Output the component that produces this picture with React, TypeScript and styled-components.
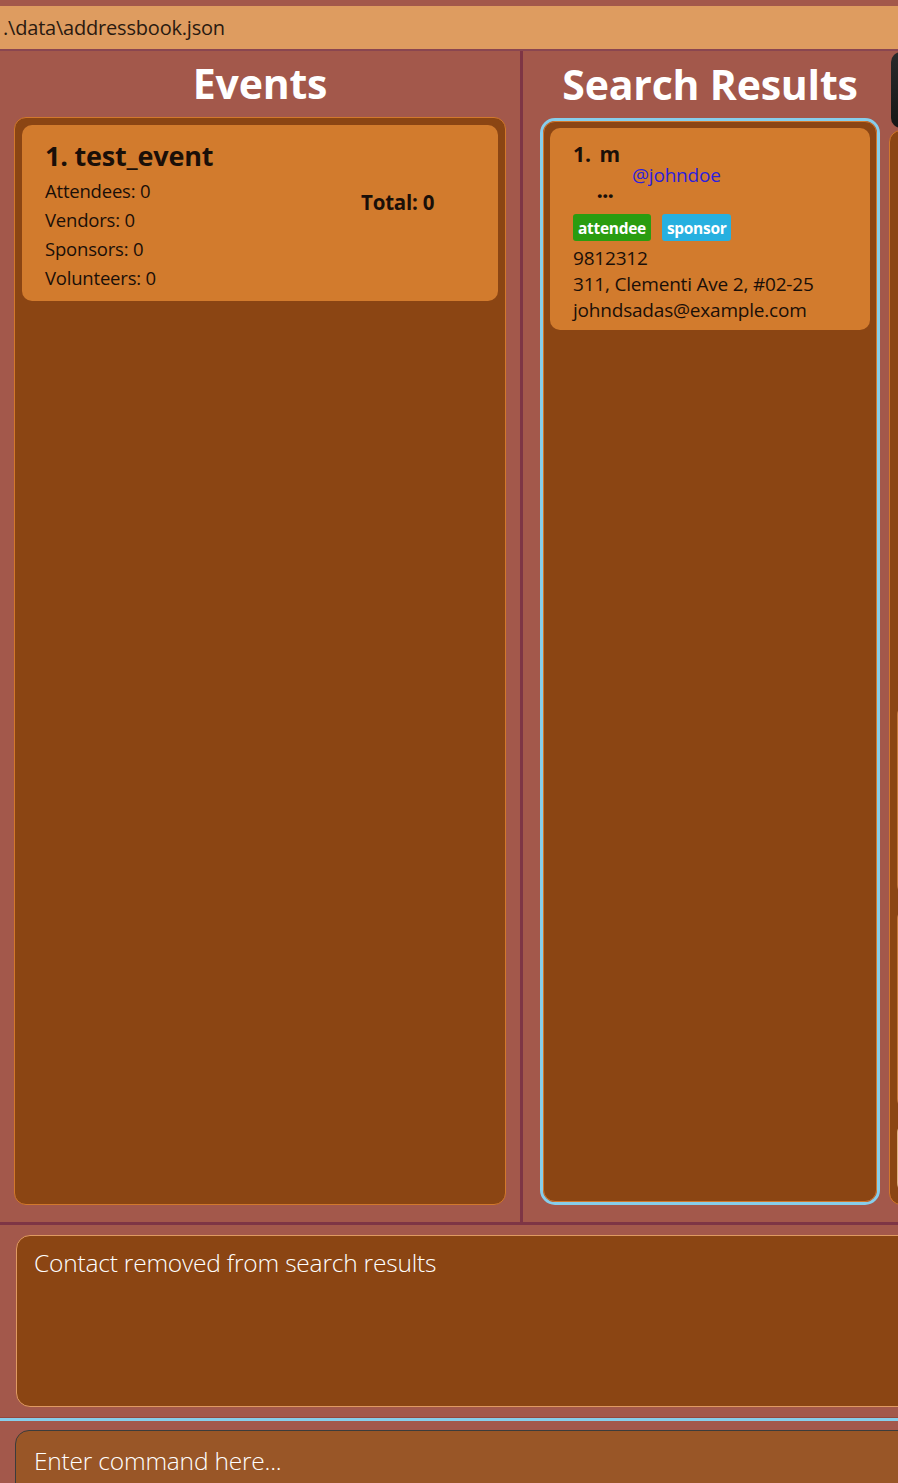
import styled, { createGlobalStyle } from "styled-components";

const GlobalStyle = createGlobalStyle`
  html, body {
    margin: 0;
    padding: 0;
    background: #a3584b;
    overflow: hidden;
  }
  * {
    box-sizing: border-box;
  }
`;

const Window = styled.div`
  width: 898px;
  height: 1483px;
  display: flex;
  flex-direction: column;
  overflow: hidden;
  background: #a3584b;
  font-family: "Open Sans", "Noto Sans", sans-serif;
`;

const PathBar = styled.div`
  margin-top: 6px;
  height: 45px;
  flex-shrink: 0;
  display: flex;
  align-items: center;
  padding-left: 3px;
  background: #de9c60;
  border-bottom: 2px solid #8a4650;
  color: #2a1a10;
  font-size: 20px;
  letter-spacing: -0.2px;
`;

const Main = styled.div`
  height: 1174px;
  flex-shrink: 0;
  display: flex;
  border-bottom: 3px solid #7e3545;
`;

const Column = styled.div<{ $width: number; $pad: string }>`
  width: ${(p) => p.$width}px;
  flex-shrink: 0;
  display: flex;
  flex-direction: column;
  padding: ${(p) => p.$pad};
`;

const Divider = styled.div`
  width: 3px;
  flex-shrink: 0;
  background: #7e3545;
`;

const Heading = styled.h1<{ $height: number }>`
  margin: 0;
  height: ${(p) => p.$height}px;
  display: flex;
  align-items: center;
  justify-content: center;
  color: #ffffff;
  font-size: 41px;
  font-weight: 700;
  letter-spacing: -0.2px;
  padding-bottom: 2px;
`;

const ListPanel = styled.div`
  flex: 1;
  background: #8b4513;
  border: 1px solid #d2782c;
  border-radius: 12px;
  padding: 7px 7px;
`;

const FocusRing = styled.div`
  flex: 1;
  display: flex;
  border: 3px solid #87ceeb;
  border-radius: 15px;
`;

const FocusPanel = styled(ListPanel)`
  padding: 6px;
  border-radius: 12px;
`;

const Card = styled.div`
  background: #d27b2d;
  border-radius: 10px;
  color: #1a0f08;
`;

const EventCard = styled(Card)`
  display: flex;
  padding: 14px 0 9px 23px;
`;

const EventInfo = styled.div`
  flex: 1;
  display: flex;
  flex-direction: column;
`;

const EventTitle = styled.div`
  font-size: 27px;
  font-weight: 700;
  line-height: 34px;
  margin-bottom: 3px;
  letter-spacing: -0.2px;
`;

const StatLine = styled.div`
  font-size: 18.5px;
  line-height: 29px;
  letter-spacing: -0.2px;
`;

const Total = styled.div`
  width: 137px;
  padding-top: 49px;
  font-size: 20.5px;
  font-weight: 700;
  letter-spacing: -0.2px;
`;

const PersonCard = styled(Card)`
  padding: 12px 0 7px 23px;
`;

const NameRow = styled.div`
  font-size: 21px;
  font-weight: 700;
  line-height: 28px;
  word-spacing: 3px;
`;

const Handle = styled.div`
  padding-left: 59px;
  margin-top: -5px;
  color: #2c1fdc;
  font-size: 19px;
  line-height: 24px;
  letter-spacing: -0.2px;
`;

const Ellipsis = styled.div`
  padding-left: 24px;
  margin-top: -6px;
  font-size: 19px;
  font-weight: 800;
  line-height: 20px;
`;

const Tags = styled.div`
  display: flex;
  gap: 11px;
  margin-top: 13px;
  margin-bottom: 4px;
`;

const Tag = styled.span<{ $color: string }>`
  height: 27px;
  display: inline-flex;
  align-items: center;
  padding: 0 5px;
  border-radius: 3px;
  background: ${(p) => p.$color};
  color: #ffffff;
  font-size: 15.5px;
  font-weight: 700;
  letter-spacing: -0.3px;
`;

const Detail = styled.div`
  font-size: 19px;
  line-height: 26px;
  letter-spacing: -0.2px;
`;

const ClippedColumn = styled.div`
  flex-shrink: 0;
  width: 300px;
  display: flex;
  flex-direction: column;
  padding: 0 0 17px 0;
`;

const DarkBadge = styled.div`
  margin: 1px 0 2px 2px;
  height: 76px;
  width: 60px;
  border-radius: 10px;
  background: linear-gradient(#2a2a2a, #161616);
`;

const SliverPanel = styled(ListPanel)`
  display: flex;
  flex-direction: column;
  gap: 14px;
  padding: 10px 0 6px 7px;
`;

const Sliver = styled.div<{ $height: number; $tone: string }>`
  height: ${(p) => p.$height}px;
  border-radius: 10px;
  background: ${(p) => p.$tone};
`;

const ResultArea = styled.div`
  height: 193px;
  flex-shrink: 0;
  padding: 10px 0 0 16px;
  border-bottom: 1px solid #94473d;
`;

const ResultBox = styled.div`
  height: 172px;
  width: 900px;
  background: #8b4513;
  border: 1px solid #e09a62;
  border-radius: 14px;
  padding: 10px 17px;
  color: #ffffff;
  font-size: 24.5px;
  font-weight: 300;
  letter-spacing: -0.2px;
`;

const CommandArea = styled.div`
  flex: 1;
  border-top: 3px solid #87ceeb;
  padding: 9px 0 0 15px;
`;

const CommandInput = styled.input`
  width: 900px;
  height: 70px;
  background: #995627;
  border: 1.5px solid #3c3c3c;
  border-radius: 14px;
  padding: 0 18px 10px;
  color: #ffffff;
  font-family: "Open Sans", "Noto Sans", sans-serif;
  font-size: 24.5px;
  font-weight: 300;
  letter-spacing: -0.2px;
  outline: none;
  &::placeholder {
    color: #ffffff;
    opacity: 1;
  }
`;

const stats = ["Attendees", "Vendors", "Sponsors", "Volunteers"];

export default function App() {
  return (
    <>
      <GlobalStyle />
      <Window>
        <PathBar>.\data\addressbook.json</PathBar>
        <Main>
          <Column $width={520} $pad="0 14px 17px 14px">
            <Heading $height={66}>Events</Heading>
            <ListPanel>
              <EventCard>
                <EventInfo>
                  <EventTitle>1. test_event</EventTitle>
                  {stats.map((s) => (
                    <StatLine key={s}>{s}: 0</StatLine>
                  ))}
                </EventInfo>
                <Total>Total: 0</Total>
              </EventCard>
            </ListPanel>
          </Column>
          <Divider />
          <Column $width={366} $pad="0 9px 17px 17px">
            <Heading $height={67}>Search Results</Heading>
            <FocusRing>
              <FocusPanel>
                <PersonCard>
                  <NameRow>1. m</NameRow>
                  <Handle>@johndoe</Handle>
                  <Ellipsis>...</Ellipsis>
                  <Tags>
                    <Tag $color="#2a9c10">attendee</Tag>
                    <Tag $color="#27b0e0">sponsor</Tag>
                  </Tags>
                  <Detail>9812312</Detail>
                  <Detail>311, Clementi Ave 2, #02-25</Detail>
                  <Detail>johndsadas@example.com</Detail>
                </PersonCard>
              </FocusPanel>
            </FocusRing>
          </Column>
          <ClippedColumn>
            <DarkBadge />
            <SliverPanel>
              <Sliver $height={550} $tone="#8b4513" />
              <Sliver $height={190} $tone="#c77a3c" />
              <Sliver $height={200} $tone="#c77a3c" />
              <Sliver $height={70} $tone="#e0b080" />
            </SliverPanel>
          </ClippedColumn>
        </Main>
        <ResultArea>
          <ResultBox>Contact removed from search results</ResultBox>
        </ResultArea>
        <CommandArea>
          <CommandInput placeholder="Enter command here..." />
        </CommandArea>
      </Window>
    </>
  );
}
